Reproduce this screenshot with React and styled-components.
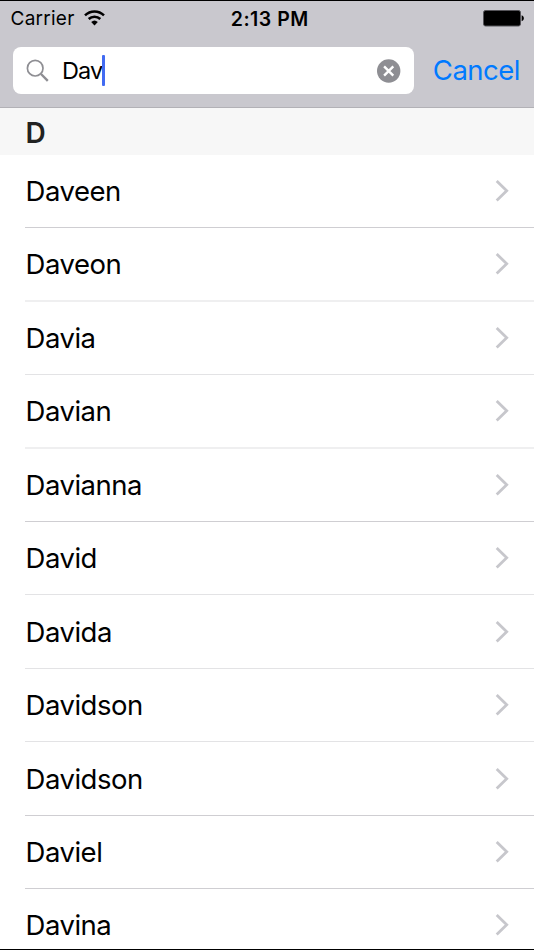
import React from "react"
import styled, { createGlobalStyle } from "styled-components"

const GlobalStyle = createGlobalStyle`
	* {
		box-sizing: border-box;
	}
	body {
		margin: 0;
		background-color: #fff;
		font-family: Inter, "Liberation Sans", sans-serif;
		color: #000;
	}
`
const Screen = styled.div`
	display: flex;
	flex-direction: column;
	width: 534px;
	height: 950px;
	overflow: hidden;
	border-top: 1px solid #000;
	border-bottom: 1px solid #000;
`
const TopBar = styled.header`
	flex: none;
	height: 107px;
	background-color: #c9c8ce;
	border-bottom: 1px solid #b2b1b6;
`
const StatusBar = styled.div`
	display: grid;
	grid-template-columns: 1fr auto 1fr;
	align-items: center;
	height: 34px;
	padding: 0 9px 0 10.5px;
	font-size: 19px;
	line-height: 32px;
`
const StatusLeft = styled.div`
	display: flex;
	align-items: center;
	gap: 9px;
	padding-top: 2px;
	letter-spacing: 0.25px;

	svg {
		margin-bottom: 2px;
	}
`
const Clock = styled.div`
	padding: 2px 0 0 4px;
	font-size: 19.5px;
	font-weight: 600;
	letter-spacing: 0.5px;
`
const StatusRight = styled.div`
	display: flex;
	justify-content: flex-end;
`
const SearchRow = styled.div`
	display: flex;
	align-items: center;
	padding: 12px 14px 0 13px;
`
const SearchField = styled.div`
	display: flex;
	align-items: center;
	width: 401px;
	height: 47px;
	padding: 0 13px;
	border-radius: 8px;
	background-color: #fff;
`
const Query = styled.span`
	margin-left: 13px;
	font-size: 23.5px;
	letter-spacing: -0.9px;
	line-height: 45px;
	padding-bottom: 1px;
`
const Caret = styled.span`
	width: 3px;
	height: 31px;
	border-radius: 1px;
	background-color: #426bf2;
`
const ClearButton = styled.button`
	display: flex;
	margin-left: auto;
	padding: 0;
	border: 0;
	background: none;
`
const CancelButton = styled.button`
	margin-left: auto;
	padding: 0 0 2px;
	border: 0;
	background: none;
	color: #007aff;
	font-family: inherit;
	font-size: 27.5px;
	letter-spacing: -0.5px;
	line-height: 44px;
`
const SectionTitle = styled.h2`
	flex: none;
	height: 47px;
	margin: 0;
	padding-left: 25.6px;
	background-color: #f7f7f7;
	color: #222;
	font-size: 28px;
	font-weight: 600;
	line-height: 50px;
`
const List = styled.ul`
	margin: 0;
	padding: 0 0 0 25px;
	list-style: none;
`
const separators = {
	solid: "1px solid #cfced2",
	light: "1px solid #e3e3e5",
	wide: "2px solid #efeff0"
}
const Row = styled.li`
	display: flex;
	align-items: center;
	justify-content: space-between;
	height: ${props => props.$height}px;
	padding: 0 25px 0 0.6px;
	border-bottom: ${props => separators[props.$line]};
`
const Name = styled.span`
	font-size: 27.5px;
	letter-spacing: -0.5px;
	line-height: 72px;
`

const WifiIcon = () => (
	<svg width="21" height="16" viewBox="0 0 21 16" fill="none" stroke="#000" strokeWidth="2.5">
		<path d="M1 5.4a13.6 13.6 0 0 1 19 0" />
		<path d="M4.7 9a8.3 8.3 0 0 1 11.6 0" />
		<path d="M10.5 15.5 7.2 12a4.8 4.8 0 0 1 6.6 0z" fill="#000" stroke="none" />
	</svg>
)

const BatteryIcon = () => (
	<svg width="42" height="17" viewBox="0 0 42 17">
		<rect x="0.5" y="0.5" width="37" height="15.5" rx="2" fill="#000" stroke="#555459" />
		<path d="M38.6 5.2c3 1 3 5 0 6z" fill="#000" />
	</svg>
)

const SearchIcon = () => (
	<svg width="23" height="23" viewBox="0 0 23 23" fill="none" stroke="#8e8e93">
		<circle cx="9.2" cy="9.2" r="7.8" strokeWidth="1.7" />
		<path d="m15 15 6.8 6.8" strokeWidth="2.4" />
	</svg>
)

const ClearIcon = () => (
	<svg width="24" height="24" viewBox="0 0 24 24">
		<circle cx="11.7" cy="12" r="11.7" fill="#8e8e93" />
		<path d="m7.1 7.4 9.2 9.2m0-9.2-9.2 9.2" stroke="#fff" strokeWidth="2.4" />
	</svg>
)

const Chevron = () => (
	<svg width="14" height="22" viewBox="0 0 14 22" fill="none" stroke="#c7c7cc" strokeWidth="2.8">
		<path d="m1.7 1 10 9.8-10 9.8" />
	</svg>
)

const names = [
	{ name: "Daveen", height: 73, line: "solid" },
	{ name: "Daveon", height: 74, line: "wide" },
	{ name: "Davia", height: 73, line: "light" },
	{ name: "Davian", height: 74, line: "wide" },
	{ name: "Davianna", height: 73, line: "solid" },
	{ name: "David", height: 73, line: "light" },
	{ name: "Davida", height: 74, line: "light" },
	{ name: "Davidson", height: 73, line: "light" },
	{ name: "Davidson", height: 74, line: "solid" },
	{ name: "Daviel", height: 73, line: "solid" },
	{ name: "Davina", height: 73, line: "solid" }
]

function App() {
	return (
		<>
			<GlobalStyle />
			<Screen>
				<TopBar>
					<StatusBar>
						<StatusLeft>
							Carrier
							<WifiIcon />
						</StatusLeft>
						<Clock>2:13 PM</Clock>
						<StatusRight>
							<BatteryIcon />
						</StatusRight>
					</StatusBar>
					<SearchRow>
						<SearchField>
							<SearchIcon />
							<Query>Dav</Query>
							<Caret />
							<ClearButton aria-label="Clear">
								<ClearIcon />
							</ClearButton>
						</SearchField>
						<CancelButton>Cancel</CancelButton>
					</SearchRow>
				</TopBar>
				<SectionTitle>D</SectionTitle>
				<List>
					{names.map((item, index) => (
						<Row key={index} $height={item.height} $line={item.line}>
							<Name>{item.name}</Name>
							<Chevron />
						</Row>
					))}
				</List>
			</Screen>
		</>
	)
}

export default App
